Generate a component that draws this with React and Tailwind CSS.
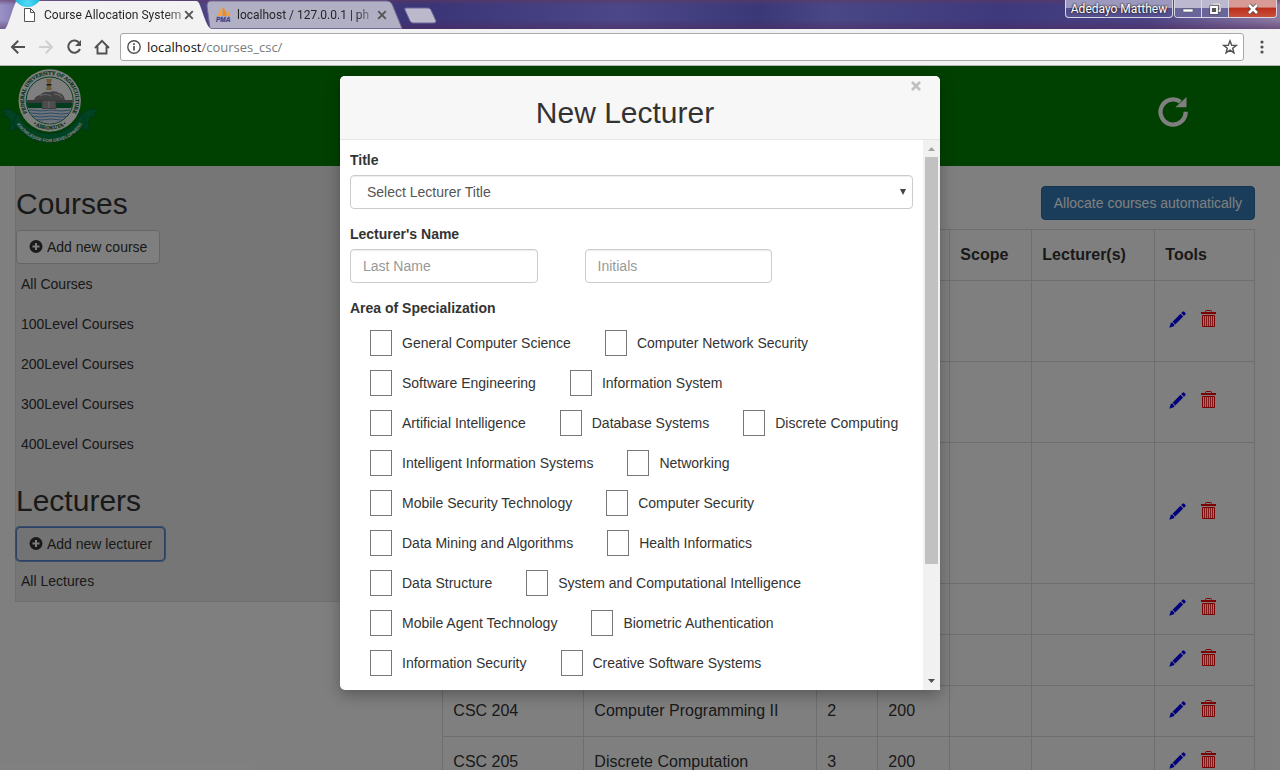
import React from "react";

const levels = ["All Courses", "100Level Courses", "200Level Courses", "300Level Courses", "400Level Courses"];

const areas = [
  ["General Computer Science", "Computer Network Security"],
  ["Software Engineering", "Information System"],
  ["Artificial Intelligence", "Database Systems", "Discrete Computing"],
  ["Intelligent Information Systems", "Networking"],
  ["Mobile Security Technology", "Computer Security"],
  ["Data Mining and Algorithms", "Health Informatics"],
  ["Data Structure", "System and Computational Intelligence"],
  ["Mobile Agent Technology", "Biometric Authentication"],
  ["Information Security", "Creative Software Systems"],
];

const courses = [
  { height: "h-[81px]" },
  { height: "h-[81px]" },
  { height: "h-[141px]" },
  { height: "h-[51px]" },
  { height: "h-[51px]" },
  { height: "h-[51px]", code: "CSC 204", title: "Computer Programming II", units: "2", level: "200" },
  { height: "h-[51px]", code: "CSC 205", title: "Discrete Computation", units: "3", level: "200" },
];

function TabClose() {
  return (
    <svg viewBox="0 0 10 10" className="size-[10px]" stroke="#555" strokeWidth="1.9" fill="none">
      <path d="M1.2 1.2 8.8 8.8M8.8 1.2 1.2 8.8" />
    </svg>
  );
}

function BrowserTabs() {
  return (
    <div className="relative flex h-[29px] items-start overflow-hidden bg-[linear-gradient(to_right,#9a92c4_0,#7f74b0_20px,#4b4184_210px,#3a3577_430px,#4b4788_620px,#3b3878_760px,#4a4786_830px,#3d397c_1000px,#4b4384_1150px,#8d7ba3_1280px)]">
      <div className="absolute inset-0 bg-[linear-gradient(to_bottom,rgba(95,55,95,.6)_0,transparent_5px,transparent_20px,rgba(80,40,90,.5)_29px)]" />
      <div className="relative z-10 ml-[5px] flex h-full w-[206px] items-center pl-[19px] pr-[16px]">
        <svg viewBox="0 0 206 29" preserveAspectRatio="none" className="absolute inset-0 size-full">
          <path d="M0 29 C3 27 8 7 11 2 Q12 1 14 1 H191 Q193 1 194 3 C198 12 201 26 206 29Z" fill="#f2f2f2" />
        </svg>
        <svg viewBox="0 0 11 14" className="relative h-[14px] w-[11px] shrink-0" fill="#fff" stroke="#555" strokeWidth="1">
          <path d="M.5.5H6.5L10.5 4.5V13.5H.5ZM6.5.5V4.5H10.5" />
        </svg>
        <span className="relative ml-[9px] w-[138px] shrink-0 overflow-hidden whitespace-nowrap bg-[linear-gradient(to_right,#222_118px,#2228_138px)] bg-clip-text text-[12px] leading-4 text-transparent">
          Course Allocation System
        </span>
        <button aria-label="Close tab" className="relative ml-[2px]"><TabClose /></button>
      </div>
      <div className="relative -ml-[5px] flex h-full w-[197px] items-center pl-[9px]">
        <svg viewBox="0 0 197 29" preserveAspectRatio="none" className="absolute inset-0 size-full">
          <path d="M4 28.5 L1 6 Q1 1 5 1 H181 Q184 1 186 4 L196 28.5Z" fill="#b1afc3" stroke="#736c96" strokeWidth="1" />
        </svg>
        <svg viewBox="0 0 18 15" className="relative h-[15px] w-[18px] shrink-0">
          <path d="M6 1V9H1.500Q5 6 6 1Z" fill="#f5a03c" />
          <path d="M7.500 0Q12 4 11.500 9H7.500Z" fill="#f08c22" />
          <path d="M12.300 3Q15.500 6 15.500 9H12.300Z" fill="#f5a03c" />
          <text x="1" y="14.500" fontSize="6.500" fontWeight="bold" fontStyle="italic" fontFamily="Liberation Sans, sans-serif" fill="#46488f" stroke="#46488f" strokeWidth=".3">PMA</text>
        </svg>
        <span className="relative ml-[4px] w-[134px] shrink-0 overflow-hidden whitespace-nowrap bg-[linear-gradient(to_right,#222_118px,#2226_132px)] bg-clip-text text-[12px] leading-4 text-transparent">
          localhost / 127.0.0.1 | ph
        </span>
        <button aria-label="Close tab" className="relative ml-[6px]"><TabClose /></button>
      </div>
      <button aria-label="New tab" className="relative mt-[7px] ml-[1px]">
        <svg viewBox="0 0 33 17" className="h-[17px] w-[33px]">
          <path d="M2 1H24Q26 1 27 3L32 14Q32 16 30 16H9Q7 16 6 14L1 3Q0 1 2 1Z" fill="#bcb9cd" stroke="#6c659a" />
        </svg>
      </button>
      <div className="absolute -top-[22px] left-[13px] z-20 size-[29px] rounded-full bg-[radial-gradient(circle_at_50%_85%,#4fdcf6,#12a7d8_60%,#0a6fa8)]" />
      <div className="relative ml-auto mr-[3px] flex h-[18px] text-white">
        <div className="mr-px flex w-[108px] items-center justify-center rounded-b border border-t-0 border-[#d9d6e6] bg-[linear-gradient(#9d98bd_45%,#555090_50%)] text-[12px] leading-4 [text-shadow:0_0_2px_#222,0_0_2px_#222]">
          Adedayo Matthew
        </div>
        <div className="flex overflow-hidden rounded-b border border-t-0 border-[#d9d6e6]">
          <button aria-label="Minimize" className="flex w-[27px] items-center justify-center border-r border-[#d9d6e6] bg-[linear-gradient(#bcb8d0_45%,#69649a_50%)]">
            <svg viewBox="0 0 12 12" className="size-3"><path d="M1 6H11V9H1Z" fill="#fff" stroke="#555" strokeWidth=".6" /></svg>
          </button>
          <button aria-label="Restore" className="flex w-[27px] items-center justify-center border-r border-[#d9d6e6] bg-[linear-gradient(#bcb8d0_45%,#69649a_50%)]">
            <svg viewBox="0 0 12 12" className="size-3">
              <path d="M4 1H11V8H9" fill="none" stroke="#444" strokeWidth="2.600" />
              <path d="M4 1H11V8H9" fill="none" stroke="#fff" strokeWidth="1.400" />
              <path d="M2 4H8V10H2Z" fill="#555" stroke="#444" strokeWidth="3" />
              <path d="M2 4H8V10H2Z" fill="#555" stroke="#fff" strokeWidth="1.800" />
            </svg>
          </button>
          <button aria-label="Close" className="flex w-[47px] items-center justify-center bg-[linear-gradient(#d89a94_40%,#bd2f1d_50%,#c8503a)]">
            <svg viewBox="0 0 12 12" className="size-3">
              <path d="M2 2 10 10M10 2 2 10" stroke="#444" strokeWidth="4" />
              <path d="M2 2 10 10M10 2 2 10" stroke="#fff" strokeWidth="2.600" />
            </svg>
          </button>
        </div>
      </div>
    </div>
  );
}

function Toolbar() {
  return (
    <div className="flex h-[37px] items-center border-b border-[#b6b6b6] bg-[#f2f2f2] pl-[10px] pr-[16px]">
      <div className="flex items-center gap-[12px]">
        <button aria-label="Back">
          <svg viewBox="0 0 16 16" className="size-4" fill="none" stroke="#505050" strokeWidth="2"><path d="M15 8H2.500M8.200 1.800 2 8l6.200 6.200" /></svg>
        </button>
        <button aria-label="Forward">
          <svg viewBox="0 0 16 16" className="size-4" fill="none" stroke="#cfcfcf" strokeWidth="2"><path d="M1 8H13.500M7.800 1.800 14 8l-6.200 6.200" /></svg>
        </button>
        <button aria-label="Reload">
          <svg viewBox="0 0 16 16" className="size-4">
            <path d="M13.500 4.200A6.100 6.100 0 1 0 14 10" fill="none" stroke="#505050" strokeWidth="2" />
            <path d="M15 1V7H9Z" fill="#505050" />
          </svg>
        </button>
        <button aria-label="Home">
          <svg viewBox="0 0 16 16" className="size-4" fill="none" stroke="#505050" strokeWidth="1.900"><path d="M1 9 8 1.800 15 9M3.500 7.500V14.500H12.500V7.500" /></svg>
        </button>
      </div>
      <div className="ml-[10px] flex h-[28px] flex-1 items-center rounded-[3px] border border-[#a8a8a8] bg-white pl-[6px] pr-[5px]">
        <svg viewBox="0 0 14 14" className="size-[14px]" fill="none" stroke="#505050">
          <circle cx="7" cy="7" r="6.200" strokeWidth="1.400" />
          <path d="M7 6V10.500M7 3.200V4.900" strokeWidth="1.700" />
        </svg>
        <a href="#address" className="ml-[6px] font-['Open_Sans',sans-serif] text-[13px] leading-5 text-[#7a7a7a]">
          <span className="text-[#111]">localhost</span>/courses_csc/
        </a>
        <button aria-label="Bookmark" className="ml-auto">
          <svg viewBox="0 0 16 16" className="size-4" fill="none" stroke="#505050" strokeWidth="1.400"><path d="M8 1.800 9.700 6.200 14.300 6.400 10.700 9.300 11.900 13.800 8 11.200 4.100 13.800 5.300 9.300 1.700 6.400 6.300 6.200Z" /></svg>
        </button>
      </div>
      <button aria-label="Menu" className="ml-[16px]">
        <svg viewBox="0 0 4 14" className="h-[14px] w-1" fill="#505050"><circle cx="2" cy="2" r="1.600" /><circle cx="2" cy="7" r="1.600" /><circle cx="2" cy="12" r="1.600" /></svg>
      </button>
    </div>
  );
}

function Crest() {
  return (
    <svg viewBox="0 0 98 80" className="h-[80px] w-[98px]" role="img" aria-label="Federal University of Agriculture, Abeokuta">
      <defs>
        <path id="arcTop" d="M29.500 50.500A25.800 25.800 0 1 1 69.900 50.500" />
        <path id="arcBottom" d="M27 52.500A29 29 0 0 0 72.500 52.500" />
        <path id="arcRibbon" d="M11.500 45A39 39 0 0 0 87.900 45" />
        <clipPath id="disc"><circle cx="49.700" cy="34.500" r="23" /></clipPath>
      </defs>
      <g fill="#008545" stroke="#006534" strokeWidth=".8">
        <path d="M2 45Q8 40 14 46L22 50 14 64H9L11 56 7 50 2 50 5 47Z" />
        <path d="M97 45Q91 40 85 46L77 50 85 64H90L88 56 92 50 97 50 94 47Z" />
        <path d="M17 47A36 36 0 0 0 82 47L86 57A44 44 0 0 1 13 57Z" />
      </g>
      <circle cx="49.700" cy="34.500" r="31.200" fill="#fff" />
      <circle cx="49.700" cy="34.500" r="23.500" fill="#fff" stroke="#008040" strokeWidth="1" />
      <g clipPath="url(#disc)">
        <path d="M26 34H74V37H26Z" fill="#777" />
        <path d="M26 37H74V42H26Z" fill="#007a3d" />
        <path d="M26 42H74V60H26Z" fill="#dfe9f5" />
        <path d="M26 44.500Q31 43.500 36 44.500T46 44.500 56 44.500 66 44.500 76 44.500M26 47.500Q31 46.500 36 47.500T46 47.500 56 47.500 66 47.500 76 47.500M26 50.500Q31 49.500 36 50.500T46 50.500 56 50.500 66 50.500 76 50.500M26 53.500Q31 52.500 36 53.500T46 53.500 56 53.500 66 53.500 76 53.500" fill="none" stroke="#5b95c8" strokeWidth="1" />
        <path d="M34 34Q35 30 40 29 44 25 49 26 56 24 59 27 64 28 65 34Z" fill="#858585" />
        <path d="M40 30Q46 27 51 30M54 28Q60 28 62 32" fill="none" stroke="#d0d0d0" strokeWidth="1.200" />
      </g>
      <path d="M46 13H52L50.500 18.500 52 24H46L47.500 18.500Z" fill="#d9b873" />
      <path d="M46.500 18H51.500V19.500H46.500Z" fill="#333" />
      <path d="M42 35Q45.500 33 49 35 52.500 33 56 35V42.500H42Z" fill="#9a9a9a" stroke="#666" strokeWidth=".7" />
      <path d="M49 35V42" stroke="#eee" strokeWidth=".7" />
      <g fontFamily="Liberation Serif, serif" fontWeight="bold" fill="#00662f" stroke="#00662f" strokeWidth=".2">
        <text fontSize="5.200"><textPath href="#arcTop" startOffset="50%" textAnchor="middle">FEDERAL UNIVERSITY OF AGRICULTURE</textPath></text>
        <text fontSize="5.200"><textPath href="#arcBottom" startOffset="50%" textAnchor="middle">• ABEOKUTA •</textPath></text>
      </g>
      <text fontSize="4.600" fontWeight="bold" fontFamily="Liberation Sans, sans-serif" fill="#fff"><textPath href="#arcRibbon" startOffset="50%" textAnchor="middle">KNOWLEDGE FOR DEVELOPMENT</textPath></text>
    </svg>
  );
}

function PlusSign() {
  return (
    <svg viewBox="0 0 14 14" className="size-[14px]">
      <circle cx="7" cy="6.500" r="6.500" fill="#333" />
      <path d="M7 3V10M3.500 6.500H10.500" stroke="#fff" strokeWidth="2" />
    </svg>
  );
}

function Pencil() {
  return (
    <svg viewBox="0 0 17 17" className="size-[17px]" fill="#00f">
      <path d="M12.200 2.100 13.600 .7Q14.400 0 15.200 .7L16.300 1.800Q17 2.600 16.300 3.400L14.900 4.800Z" />
      <path d="M11.500 2.800 14.200 5.500 6.300 13.400 3.600 10.700Z" />
      <path d="M3 11.300 5.700 14 4.700 15.200 .3 16.700 1.800 12.300Z" />
    </svg>
  );
}

function Trash() {
  return (
    <svg viewBox="0 0 15 18" className="h-[18px] w-[15px]" fill="none" stroke="#f00">
      <path d="M4.500 3V1.500Q4.500 .5 5.500 .5H9.500Q10.500 .5 10.500 1.500V3" strokeWidth="1" />
      <path d="M0 3H15" strokeWidth="2" />
      <path d="M1.500 5.500H13.500V16.500H1.500Z" strokeWidth="1" />
      <path d="M3.500 5.500V16.500M5.500 5.500V16.500M7.500 5.500V16.500M9.500 5.500V16.500M11.500 5.500V16.500" strokeWidth=".8" />
    </svg>
  );
}

function Sidebar() {
  const link = "block h-[40px] pl-[5px] leading-[40px] text-[#333]";
  return (
    <aside className="w-1/3 shrink-0 self-start border border-t-0 border-[#ddd] bg-[#ececec] pt-[21px]">
      <h2 className="text-[30px] leading-[33px]">Courses</h2>
      <button className="mt-[10px] flex h-[34px] items-center gap-[4px] rounded border border-[#ccc] bg-white px-[12px]">
        <PlusSign />Add new course
      </button>
      <nav>
        {levels.map((l) => <a key={l} href="#courses" className={link}>{l}</a>)}
      </nav>
      <h2 className="mt-[20px] text-[30px] leading-[33px]">Lecturers</h2>
      <button className="mt-[10px] flex h-[34px] items-center gap-[4px] rounded border border-[#5a84c4] bg-[#e6e6e6] px-[12px] ring-1 ring-[#7399d6]">
        <PlusSign />Add new lecturer
      </button>
      <a href="#lecturers" className={link}>All Lectures</a>
    </aside>
  );
}

function CourseTable() {
  const cell = "border border-[#ddd] px-[10px] text-left align-middle";
  return (
    <table className="mt-[9px] w-full table-fixed border-collapse text-[16px] leading-[30px]">
      <colgroup>
        <col className="w-[141px]" /><col className="w-[233px]" /><col className="w-[61px]" /><col className="w-[72px]" />
        <col className="w-[82px]" /><col className="w-[123px]" /><col />
      </colgroup>
      <thead>
        <tr className="h-[51px]">
          <td className={cell} /><td className={cell} /><td className={cell} /><td className={cell} />
          <th className={cell}>Scope</th><th className={cell}>Lecturer(s)</th><th className={cell}>Tools</th>
        </tr>
      </thead>
      <tbody>
        {courses.map((c, i) => (
          <tr key={i} className={c.height}>
            <td className={cell}>{c.code}</td>
            <td className={cell}>{c.title}</td>
            <td className={cell}>{c.units}</td>
            <td className={cell}>{c.level}</td>
            <td className={cell} />
            <td className={cell} />
            <td className={cell}>
              <div className="flex items-center gap-[15px] pl-[4px] pb-[4px]">
                <button aria-label="Edit"><Pencil /></button>
                <button aria-label="Delete"><Trash /></button>
              </div>
            </td>
          </tr>
        ))}
      </tbody>
    </table>
  );
}

function LecturerDialog() {
  const input = "h-[34px] w-full rounded border border-[#ccc] bg-white px-[12px] text-[#555] shadow-[inset_0_1px_1px_rgba(0,0,0,.075)] placeholder:text-[#999]";
  return (
    <div role="dialog" aria-labelledby="dialog-title" className="w-[600px] max-w-full self-start overflow-hidden rounded-[5px] rounded-br-none bg-white shadow-[0_5px_15px_rgba(0,0,0,.3)]">
      <header className="relative border-b border-[#e5e5e5] bg-[#f7f7f7] pt-[20px] pb-[10px] pr-[30px]">
        <h2 id="dialog-title" className="text-center text-[30px] leading-[33px]">New Lecturer</h2>
        <button aria-label="Close" className="absolute top-[5px] right-[19px]">
          <svg viewBox="0 0 10 10" className="size-[10px]" stroke="#bfbfbf" strokeWidth="2.600"><path d="M1 1 9 9M9 1 1 9" /></svg>
        </button>
      </header>
      <div className="flex">
        <form className="min-w-0 flex-1 p-[10px] pb-[7px]">
          <label htmlFor="title" className="block font-bold">Title</label>
          <div className="relative mt-[5px]">
            <select id="title" className="h-[34px] w-full appearance-none rounded border border-[#ccc] bg-white px-[16px] text-[#555] shadow-[inset_0_1px_1px_rgba(0,0,0,.075)]">
              <option>Select Lecturer Title</option>
            </select>
            <svg viewBox="0 0 6 6" className="pointer-events-none absolute top-[14px] right-[7px] size-[6px]" fill="#444"><path d="M0 0H6L3 6Z" /></svg>
          </div>
          <label htmlFor="last-name" className="mt-[15px] block font-bold">Lecturer's Name</label>
          <div className="mt-[5px] grid grid-cols-12">
            <input id="last-name" placeholder="Last Name" className={"col-span-4 " + input} />
            <input aria-label="Initials" placeholder="Initials" className={"col-span-4 col-start-6 " + input} />
          </div>
          <fieldset className="mt-[15px]">
            <legend className="mb-[5px] font-bold">Area of Specialization</legend>
            {areas.map((row) => (
              <div key={row[0]} className="flex h-[40px] items-center gap-[34px] pl-[20px]">
                {row.map((a) => (
                  <label key={a} className="flex items-center gap-[10px] whitespace-nowrap">
                    <input type="checkbox" className="h-[26px] w-[22px] appearance-none border border-[#777] bg-white" />
                    {a}
                  </label>
                ))}
              </div>
            ))}
          </fieldset>
        </form>
        <div aria-hidden="true" className="flex w-[17px] flex-col items-center bg-[#f1f1f1]">
          <svg viewBox="0 0 17 17" className="size-[17px]" fill="#a3a3a3"><path d="M5 11 8.500 7 12 11Z" /></svg>
          <div className="w-[13px] flex-[407] bg-[#c1c1c1]" />
          <div className="flex-[109]" />
          <svg viewBox="0 0 17 17" className="size-[17px]" fill="#505050"><path d="M5 6H12L8.500 10Z" /></svg>
        </div>
      </div>
    </div>
  );
}

export default function App() {
  return (
    <div className="flex h-screen flex-col overflow-hidden">
      <div className="shrink-0 font-[Roboto,sans-serif]">
        <BrowserTabs />
        <Toolbar />
      </div>
      <div className="relative min-h-0 flex-1 overflow-hidden bg-white font-['Liberation_Sans',Arial,sans-serif] text-[14px] leading-5 text-[#333]">
        <header className="flex h-[100px] items-start justify-between bg-[green] pr-[91px]">
          <Crest />
          <button aria-label="Reload courses" className="mt-[30px]">
            <svg viewBox="0 0 32 32" className="size-8">
              <path d="M28.700 15.800A12.600 12.600 0 1 1 23.500 5.800" fill="none" stroke="#fff" strokeWidth="4.300" />
              <path d="M29.500 1V11.300H18.300L21.500 8.500Z" fill="#fff" />
            </svg>
          </button>
        </header>
        <div className="flex gap-[14px] pl-[15px] pr-[25px]">
          <Sidebar />
          <main className="min-w-0 flex-1 pt-[20px]">
            <div className="flex justify-end">
              <button className="h-[34px] rounded border border-[#2e6da4] bg-[#337ab7] px-[12px] text-white">Allocate courses automatically</button>
            </div>
            <CourseTable />
          </main>
        </div>
        <div className="absolute inset-0 flex justify-center bg-black/50 pt-[10px]">
          <LecturerDialog />
        </div>
      </div>
    </div>
  );
}
